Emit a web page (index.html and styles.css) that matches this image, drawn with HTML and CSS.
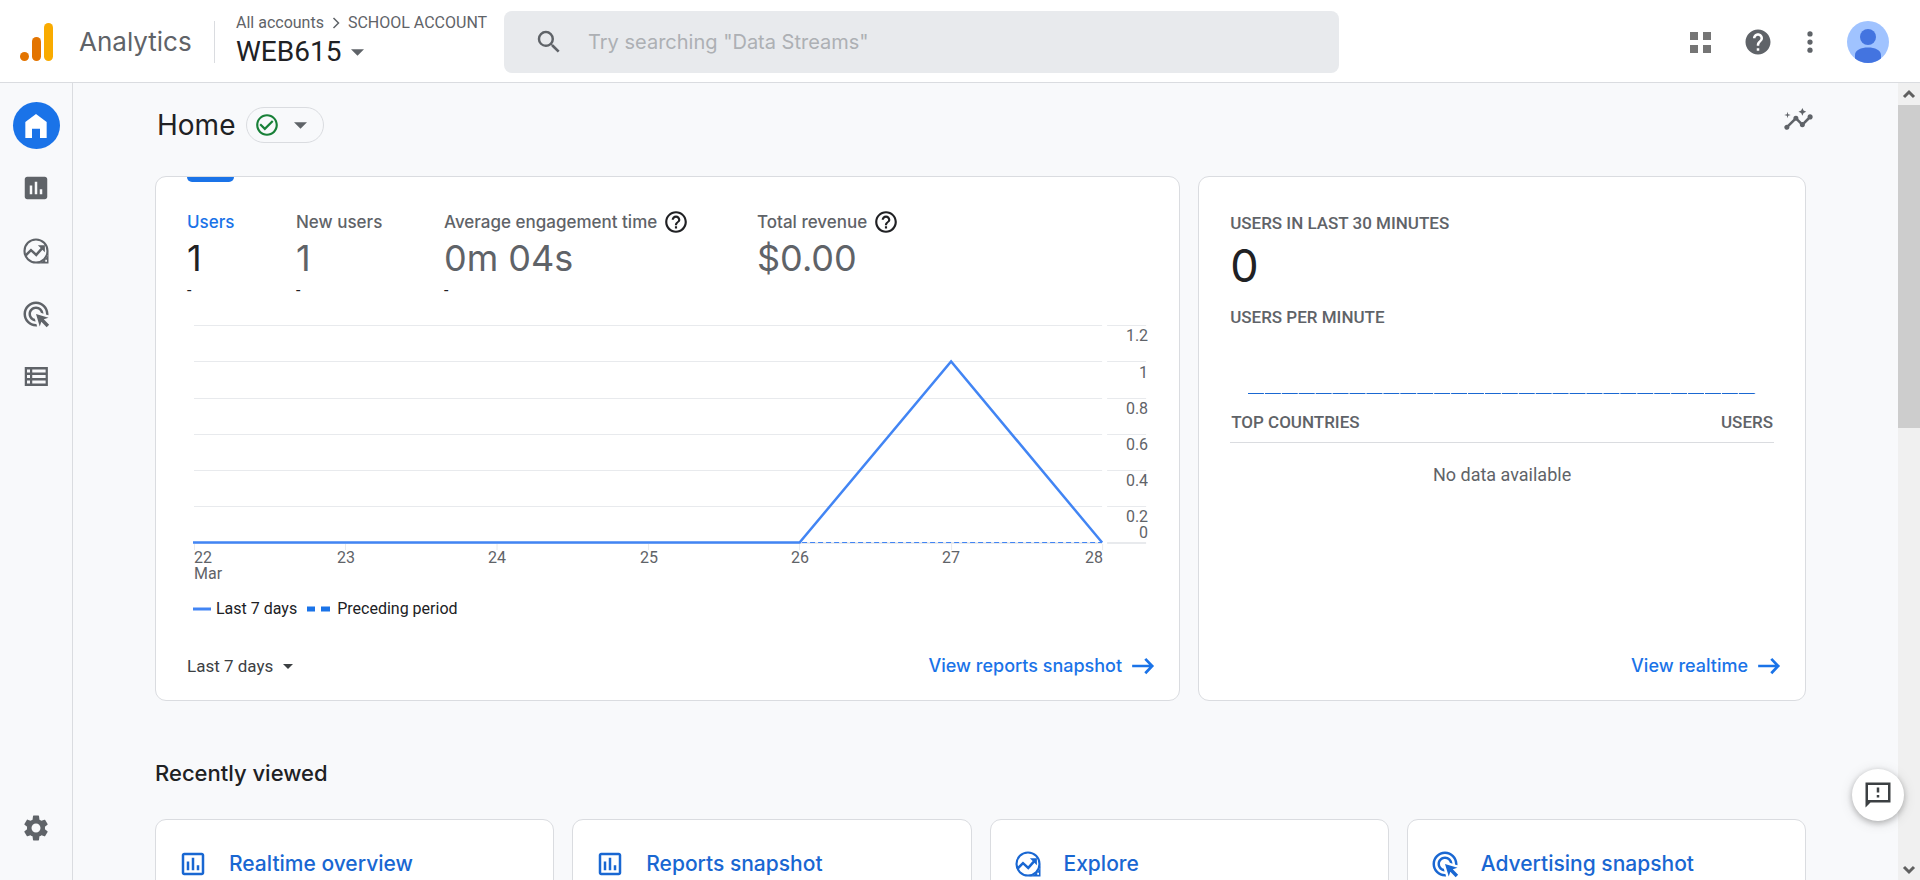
FILE: index.html
```html
<!DOCTYPE html>
<html lang="en">
<head>
<meta charset="utf-8">
<meta name="viewport" content="width=device-width, initial-scale=1">
<title>Analytics | Home</title>
<link rel="stylesheet" href="styles.css">
</head>
<body>
<svg class="sprite" aria-hidden="true">
  <symbol id="i-east" viewBox="0 0 24 24"><path d="m15 4.500-1.800 1.800L17.600 10.800H2v2.400h15.600l-4.400 4.500L15 19.500l7.200-7.500z"/></symbol>
  <symbol id="i-caret" viewBox="0 0 14 7"><path d="M0 0h14L7 7z"/></symbol>
  <symbol id="i-help" viewBox="0 0 24 24"><path d="M11 18h2v-2h-2zm1-16C6.480 2 2 6.480 2 12s4.480 10 10 10 10-4.480 10-10S17.520 2 12 2m0 18c-4.410 0-8-3.590-8-8s3.590-8 8-8 8 3.590 8 8-3.590 8-8 8m0-14c-2.210 0-4 1.790-4 4h2c0-1.100.9-2 2-2s2 .9 2 2c0 2-3 1.750-3 5h2c0-2.250 3-2.500 3-5 0-2.210-1.790-4-4-4"/></symbol>
  <symbol id="i-bars" viewBox="0 0 24 24"><path d="M9 17H7v-7h2zm4 0h-2V7h2zm4 0h-2v-4h2zm2 2H5V5h14zm0-16H5c-1.100 0-2 .9-2 2v14c0 1.100.9 2 2 2h14c1.100 0 2-.9 2-2V5c0-1.100-.9-2-2-2"/></symbol>
  <symbol id="i-explore" viewBox="0 0 24 24"><circle cx="12" cy="12" r="9.200" fill="none" stroke="currentColor" stroke-width="1.700"/><path fill-rule="evenodd" d="M22 12v10H12a10 10 0 0 0 10-10m-2.600 7v1.500h1.400V19z"/><path d="M3.500 15.800l4.500-4.500 4.200 3.800 5-5.600" fill="none" stroke="currentColor" stroke-width="2"/><path d="M13.500 7.300h5.600v5.600z"/></symbol>
  <symbol id="i-ads" viewBox="0 0 24 24"><path d="M11.710 17.990C8.530 17.840 6 15.220 6 12c0-3.310 2.690-6 6-6 3.220 0 5.840 2.530 5.990 5.710l-2.100-.63C15.480 9.310 13.890 8 12 8c-2.210 0-4 1.790-4 4 0 1.890 1.310 3.480 3.080 3.890zM22 12c0 .3-.01.6-.04.9l-1.970-.59c.01-.1.01-.21.01-.31 0-4.420-3.580-8-8-8s-8 3.580-8 8 3.580 8 8 8c.1 0 .21 0 .31-.01l.59 1.970c-.3.03-.6.040-.9.040-5.520 0-10-4.480-10-10S6.480 2 12 2s10 4.480 10 10m-3.770 4.260L22 15l-10-3 3 10 1.260-3.770 4.270 4.270 1.980-1.980z"/></symbol>
</svg>

<header class="topbar">
  <a class="brand" href="#">
    <svg class="logo" viewBox="0 0 33 38" aria-hidden="true"><rect x="24" width="9" height="38" rx="4.500" fill="#f9ab00"/><rect x="12" y="14" width="9" height="24" rx="4.500" fill="#e37400"/><circle cx="4.500" cy="33.500" r="4.500" fill="#e37400"/></svg>
    <span class="brand-name">Analytics</span>
  </a>
  <div class="account">
    <nav class="crumbs" aria-label="Account">
      <a href="#">All accounts</a>
      <svg viewBox="0 0 8 12" aria-hidden="true"><path d="M1.500 1l5 5-5 5" fill="none" stroke="currentColor" stroke-width="1.500"/></svg>
      <a href="#">SCHOOL ACCOUNT</a>
    </nav>
    <button class="property" type="button" aria-haspopup="true">WEB615 <svg class="caret"><use href="#i-caret"/></svg></button>
  </div>
  <form class="search" role="search">
    <svg class="icon" viewBox="0 0 24 24" aria-hidden="true"><path d="M15.500 14h-.79l-.28-.27A6.471 6.471 0 0 0 16 9.500 6.500 6.500 0 1 0 9.500 16c1.610 0 3.090-.59 4.230-1.570l.27.28v.79l5 4.990L20.490 19zm-6 0C7.010 14 5 11.990 5 9.500S7.010 5 9.500 5 14 7.010 14 9.500 11.990 14 9.500 14"/></svg>
    <input type="search" aria-label="Search" placeholder="Try searching &quot;Data Streams&quot;">
  </form>
  <div class="actions">
    <button class="apps" type="button" aria-label="Apps"><svg viewBox="0 0 21 21"><path d="M0 0h8v8H0zm13 0h8v8h-8zM0 13h8v8H0zm13 0h8v8h-8z"/></svg></button>
    <button type="button" aria-label="Help"><svg class="icon" viewBox="0 0 24 24"><path d="M12 2C6.480 2 2 6.480 2 12s4.480 10 10 10 10-4.480 10-10S17.520 2 12 2m1 17h-2v-2h2zm2.070-7.750-.9.920C13.450 12.900 13 13.500 13 15h-2v-.5c0-1.100.45-2.100 1.170-2.830l1.240-1.260c.37-.36.59-.86.59-1.410 0-1.100-.9-2-2-2s-2 .9-2 2H8c0-2.210 1.790-4 4-4s4 1.790 4 4c0 .88-.36 1.680-.93 2.250"/></svg></button>
    <button type="button" aria-label="More"><svg class="icon" viewBox="0 0 24 24"><circle cx="12" cy="5.500" r="2.100"/><circle cx="12" cy="12" r="2.100"/><circle cx="12" cy="18.500" r="2.100"/></svg></button>
    <button type="button" aria-label="Profile"><svg class="avatar" viewBox="0 0 42 42"><circle cx="21" cy="21" r="21" fill="#a0c3ff"/><circle cx="21" cy="16" r="8" fill="#4374e0"/><path d="M8 37.500V34c0-5 6-7.500 13-7.500S34 29 34 34v3.500A21 21 0 0 1 21 42 21 21 0 0 1 8 37.500" fill="#4374e0"/></svg></button>
  </div>
</header>

<div class="shell">
  <nav class="rail" aria-label="Main">
    <a class="rail-item active" href="#" aria-label="Home"><svg viewBox="0 0 24 24"><path d="M4 21V9l8-6 8 6v12h-5v-7H9v7z"/></svg></a>
    <a class="rail-item" href="#" aria-label="Reports"><svg viewBox="0 0 24 24"><path d="M19 3H5c-1.100 0-2 .9-2 2v14c0 1.100.9 2 2 2h14c1.100 0 2-.9 2-2V5c0-1.100-.9-2-2-2M9 17H7v-7h2zm4 0h-2V7h2zm4 0h-2v-4h2z"/></svg></a>
    <a class="rail-item" href="#" aria-label="Explore"><svg><use href="#i-explore"/></svg></a>
    <a class="rail-item" href="#" aria-label="Advertising"><svg><use href="#i-ads"/></svg></a>
    <a class="rail-item" href="#" aria-label="Configure"><svg viewBox="0 0 24 24"><path fill-rule="evenodd" d="M3 4h18.500v15.200H3zM4.800 6v2.400h2.400V6zm4.200 0v2.400h10.700V6zm-4.200 4.400v2.400h2.400v-2.400zm4.200 0v2.400h10.700v-2.400zm-4.200 4.400v2.400h2.400v-2.400zm4.200 0v2.400h10.700v-2.400z"/></svg></a>
    <a class="rail-item rail-end" href="#" aria-label="Admin"><svg viewBox="0 0 24 24"><path d="M19.140 12.940c.04-.3.060-.61.060-.94 0-.32-.02-.64-.07-.94l2.030-1.580c.18-.14.230-.41.120-.61l-1.920-3.320c-.12-.22-.37-.29-.59-.22l-2.390.96c-.5-.38-1.030-.7-1.620-.94l-.36-2.940c-.04-.24-.24-.41-.48-.41h-3.840c-.24 0-.43.170-.47.410l-.36 2.940c-.59.240-1.130.57-1.620.94l-2.390-.96c-.22-.08-.47 0-.59.220L2.740 8.870c-.12.210-.08.470.120.610l2.030 1.580c-.05.3-.09.63-.09.940s.02.640.07.940l-2.030 1.580c-.18.140-.23.410-.12.610l1.920 3.320c.12.220.37.290.59.220l2.390-.96c.5.380 1.030.7 1.620.94l.36 2.940c.05.240.24.410.48.410h3.840c.24 0 .44-.17.47-.41l.36-2.940c.59-.24 1.130-.56 1.620-.94l2.390.96c.22.080.47 0 .59-.22l1.920-3.320c.12-.22.070-.47-.12-.61zM12 15.600c-1.980 0-3.600-1.620-3.600-3.600s1.620-3.600 3.600-3.600 3.600 1.620 3.600 3.600-1.620 3.600-3.600 3.600"/></svg></a>
  </nav>

  <main class="main">
    <div class="page-head">
      <h1>Home</h1>
      <button class="status" type="button" aria-label="Data quality">
        <svg class="check" viewBox="0 0 24 24"><path d="M16.590 7.580 10 14.170l-3.590-3.580L5 12l5 5 8-8zM12 2C6.480 2 2 6.480 2 12s4.480 10 10 10 10-4.480 10-10S17.520 2 12 2m0 18c-4.420 0-8-3.580-8-8s3.580-8 8-8 8 3.580 8 8-3.580 8-8 8"/></svg>
        <svg class="caret"><use href="#i-caret"/></svg>
      </button>
      <button class="insights" type="button" aria-label="Insights"><svg viewBox="0 0 24 24"><path d="M21 8c-1.450 0-2.260 1.440-1.930 2.510l-3.550 3.560c-.3-.09-.74-.09-1.040 0l-2.550-2.550C12.270 10.450 11.460 9 10 9c-1.450 0-2.270 1.440-1.930 2.520l-4.560 4.550C2.440 15.740 1 16.550 1 18c0 1.100.9 2 2 2 1.450 0 2.260-1.440 1.930-2.510l4.550-4.560c.3.090.74.090 1.040 0l2.550 2.550C12.730 16.550 13.540 18 15 18c1.450 0 2.270-1.440 1.930-2.520l3.560-3.550C21.560 12.260 23 11.450 23 10c0-1.100-.9-2-2-2"/><path d="M15 9l.94-2.070L18 6l-2.060-.93L15 3l-.92 2.070L12 6l2.080.93zM3.500 11L4 9l2-.5L4 8l-.5-2L3 8l-2 .5L3 9z"/></svg></button>
    </div>

    <div class="cards">
      <section class="card overview">
        <div class="metrics" role="tablist">
          <button class="metric selected" type="button" role="tab" aria-selected="true"><span class="metric-label">Users</span><span class="metric-value">1</span><span class="metric-delta">-</span></button>
          <button class="metric" type="button" role="tab" aria-selected="false"><span class="metric-label">New users</span><span class="metric-value">1</span><span class="metric-delta">-</span></button>
          <button class="metric" type="button" role="tab" aria-selected="false"><span class="metric-label">Average engagement time <svg><use href="#i-help"/></svg></span><span class="metric-value">0m 04s</span><span class="metric-delta">-</span></button>
          <button class="metric" type="button" role="tab" aria-selected="false"><span class="metric-label">Total revenue <svg><use href="#i-help"/></svg></span><span class="metric-value">$0.00</span></button>
        </div>
        <svg class="chart" viewBox="0 0 961 270" role="img" aria-label="Users over the last 7 days">
          <g class="grid">
            <path d="M7 5.500H915M920 5.500H959M7 41.500H915M920 41.500H959M7 78.500H915M920 78.500H959M7 114.500H915M920 114.500H959M7 150.500H915M920 150.500H959M7 186.500H915M920 186.500H959"/>
            <path d="M7.500 224v6M158.500 224v6M310 224v6M461.500 224v6M612.500 224v6M764.500 224v6M915.500 224v6"/>
            <path class="base" d="M7 223H915M920 223H959"/>
          </g>
          <path class="previous" d="M7 222.500H915"/>
          <path class="current" d="M6 222.500H612.500L764 41.500 915 222.500"/>
          <g class="axis-y">
            <text x="961" y="21">1.2</text><text x="961" y="58">1</text><text x="961" y="94">0.8</text><text x="961" y="130">0.6</text><text x="961" y="166">0.4</text><text x="961" y="202">0.2</text><text x="961" y="218">0</text>
          </g>
          <g class="axis-x">
            <text class="first" x="7" y="243">22</text><text class="first" x="7" y="259">Mar</text><text x="159" y="243">23</text><text x="310" y="243">24</text><text x="462" y="243">25</text><text x="613" y="243">26</text><text x="764" y="243">27</text><text class="last" x="916" y="243">28</text>
          </g>
        </svg>
        <ul class="legend">
          <li><svg class="key-solid" viewBox="0 0 18 6" aria-hidden="true"><path d="M0 3h18" stroke="#4285f4" stroke-width="3"/></svg>Last 7 days</li>
          <li><svg class="key-dash" viewBox="0 0 23 6" aria-hidden="true"><path d="M0 3h8M14 3h9" stroke="#1a73e8" stroke-width="5"/></svg>Preceding period</li>
        </ul>
        <footer class="card-foot">
          <span class="range">
            <select aria-label="Date range"><option>Last 7 days</option><option>Last 28 days</option></select>
            <svg class="caret small"><use href="#i-caret"/></svg>
          </span>
          <a class="more" href="#">View reports snapshot <svg><use href="#i-east"/></svg></a>
        </footer>
      </section>

      <section class="card realtime">
        <h2 class="overline">USERS IN LAST 30 MINUTES</h2>
        <p class="live-count">0</p>
        <h2 class="overline">USERS PER MINUTE</h2>
        <svg class="minutes" viewBox="0 0 508 3" preserveAspectRatio="none" role="img" aria-label="No users in the last 30 minutes"><path d="M0 1.500H508" stroke="#1967d2" stroke-dasharray="15.930 1"/></svg>
        <table class="countries">
          <thead><tr><th scope="col">TOP COUNTRIES</th><th scope="col">USERS</th></tr></thead>
          <tbody><tr><td colspan="2">No data available</td></tr></tbody>
        </table>
        <footer class="card-foot">
          <a class="more" href="#">View realtime <svg><use href="#i-east"/></svg></a>
        </footer>
      </section>
    </div>

    <h2 class="section-title">Recently viewed</h2>
    <div class="recent">
      <a class="card tile" href="#"><svg><use href="#i-bars"/></svg>Realtime overview</a>
      <a class="card tile" href="#"><svg><use href="#i-bars"/></svg>Reports snapshot</a>
      <a class="card tile" href="#"><svg><use href="#i-explore"/></svg>Explore</a>
      <a class="card tile" href="#"><svg><use href="#i-ads"/></svg>Advertising snapshot</a>
    </div>
  </main>

  <div class="scrollbar" aria-hidden="true">
    <svg viewBox="0 0 22 22"><path d="M6 14l5-5 5 5" fill="none" stroke="#606060" stroke-width="3"/></svg>
    <div class="thumb"></div>
    <svg viewBox="0 0 22 22"><path d="M6 9l5 5 5-5" fill="none" stroke="#606060" stroke-width="3"/></svg>
  </div>
</div>

<button class="feedback" type="button" aria-label="Send feedback"><svg viewBox="0 0 24 24"><path d="M2 2v20l4-4h16V2zm18 14H4V4h16zM11 6h2v4h-2zm0 6h2v2h-2z"/></svg></button>
</body>
</html>
```
FILE: styles.css
```css
:root {
  --text: #202124;
  --muted: #5f6368;
  --line: #dadce0;
  --blue: #1a73e8;
  --link: #1967d2;
  --page: #f8f9fb;
  --display: Inter, "Open Sans", sans-serif;
}

* { box-sizing: border-box; }

body {
  margin: 0;
  height: 100vh;
  display: flex;
  flex-direction: column;
  overflow: hidden;
  background: var(--page);
  color: var(--text);
  font-family: Roboto, Arial, sans-serif;
  font-size: 16px;
}

h1, h2, p, ul { margin: 0; padding: 0; font-weight: 400; }
a { color: inherit; text-decoration: none; }
svg { display: block; flex: none; fill: currentColor; }
button, input, select { font: inherit; color: inherit; background: none; border: 0; padding: 0; margin: 0; }
.sprite { display: none; }
.caret { width: 13px; height: 7px; color: var(--muted); }
.caret.small { width: 10px; height: 5px; color: #3c4043; }
.icon { width: 30px; height: 30px; color: var(--muted); }

.topbar {
  flex: none;
  height: 83px;
  display: flex;
  align-items: center;
  padding: 2px 31px 0 20px;
  background: #fff;
  border-bottom: 1px solid var(--line);
}
.brand { display: flex; align-items: center; gap: 26px; width: 194px; color: var(--muted); }
.logo { width: 33px; height: 38px; }
.brand-name { font: 400 26px/40px var(--display); }
.account { width: 290px; padding-left: 21px; border-left: 1px solid var(--line); height: 42px; display: flex; flex-direction: column; justify-content: center; }
.crumbs { display: flex; align-items: center; gap: 8px; color: var(--muted); line-height: 20px; white-space: nowrap; }
.crumbs svg { width: 8px; height: 12px; }
.property { display: flex; align-items: center; gap: 10px; font: 400 28px/38px Roboto, sans-serif; }
.search {
  flex: 0 1 835px;
  height: 62px;
  display: flex;
  align-items: center;
  gap: 24px;
  padding: 0 35px 0 30px;
  background: #e8eaed;
  border-radius: 8px;
}
.search input { flex: 1; min-width: 0; outline: 0; font: 400 20px/30px var(--display); }
.search input::placeholder { color: #adb0b4; opacity: 1; }
.actions { margin-left: auto; display: flex; align-items: center; gap: 22px; }
.actions button { display: flex; align-items: center; justify-content: center; min-width: 30px; }
.actions .apps { margin-right: 6px; color: #757575; }
.apps svg { width: 21px; height: 21px; }
.actions .avatar { width: 42px; height: 42px; }

.shell { flex: 1; min-height: 0; display: flex; }

.rail {
  flex: none;
  width: 73px;
  display: flex;
  flex-direction: column;
  align-items: center;
  gap: 16px;
  padding: 19px 0 29px;
  border-right: 1px solid var(--line);
  color: var(--muted);
}
.rail-item { width: 47px; height: 47px; display: grid; place-items: center; border-radius: 50%; }
.rail-item svg { width: 30px; height: 30px; }
.rail-item.active { margin-bottom: -1px; background: var(--blue); color: #fff; }
.rail-item.active svg { width: 32px; height: 32px; }
.rail-end { margin-top: auto; }

.main { flex: 1; min-width: 0; padding: 0 92px 0 82px; overflow: hidden; }

.page-head { display: flex; align-items: center; height: 84px; padding-left: 2px; }
h1 { font: 400 28px/36px var(--display); }
.status { display: flex; align-items: center; gap: 14px; height: 36px; margin-left: 11px; padding: 0 16px 0 7px; border: 1px solid var(--line); border-radius: 18px; }
.status .check { width: 26px; height: 26px; color: #188038; }
.insights { margin: 0 -8px 11px auto; color: var(--muted); }
.insights svg { width: 31px; height: 31px; }

.cards { display: grid; grid-template-columns: repeat(8, minmax(0, 1fr)); gap: 18px; margin-top: 9px; }
.card { background: #fff; border: 1px solid var(--line); border-radius: 11px; }
.overview, .realtime { display: flex; flex-direction: column; }
.overview { grid-column: span 5; padding: 0 31px; }
.realtime { grid-column: span 3; padding: 35px 31px 0; }

.metrics { display: grid; grid-template-columns: 109px 148px 313px auto; justify-items: start; }
.metric { display: flex; flex-direction: column; align-items: flex-start; color: var(--muted); text-align: left; }
.metric::before { content: ""; align-self: stretch; height: 5px; margin-bottom: 26px; border-radius: 0 0 6px 6px; }
.metric.selected::before { background: var(--blue); }
.metric-label { display: flex; align-items: center; gap: 6px; height: 28px; font: 500 17px/28px var(--display); white-space: nowrap; }
.metric-label svg { width: 26px; height: 26px; color: var(--text); }
.metric-value { font: 400 36px/44px var(--display); }
.metric-delta { line-height: 22px; color: var(--text); }
.selected .metric-label { color: var(--blue); }
.selected .metric-value { color: var(--text); }

.chart { width: 100%; height: auto; margin-top: 18px; }
.chart text { font: 400 16px Roboto, sans-serif; fill: var(--muted); }
.grid path { fill: none; stroke: #e8eaed; }
.grid .base { stroke-width: 2; }
.previous { fill: none; stroke: #4285f4; stroke-width: 1; stroke-dasharray: 5 3; }
.current { fill: none; stroke: #4285f4; stroke-width: 2.5; }
.axis-y text, .axis-x .last { text-anchor: end; }
.axis-x text { text-anchor: middle; }
.axis-x .first { text-anchor: start; }

.legend { display: flex; gap: 10px; margin-left: 6px; padding-top: 9px; list-style: none; line-height: 20px; }
.legend li { display: flex; align-items: center; gap: 5px; }
.key-solid { width: 18px; height: 6px; }
.key-dash { width: 23px; height: 6px; margin-right: 2px; }

.card-foot { display: flex; align-items: center; justify-content: space-between; margin: auto -8px 0 0; padding: 33px 0 20px; }
.range { display: grid; align-items: center; color: #3c4043; font-size: 17px; }
.range > * { grid-area: 1 / 1; }
.range select { appearance: none; padding-right: 10px; }
.range .caret { justify-self: end; pointer-events: none; }
.more { display: flex; align-items: center; gap: 8px; margin-left: auto; color: var(--blue); font: 500 18px/28px var(--display); white-space: nowrap; }
.more svg { width: 26px; height: 26px; }

.overline { color: var(--muted); font: 500 17px/22px Roboto, sans-serif; }
.live-count { padding: 2px 0 10px; font: 400 45px/60px var(--display); }
.minutes { width: auto; height: 3px; margin: 64px 18px 0; }
.countries { width: 100%; margin-top: 16px; border-collapse: collapse; color: var(--muted); }
.countries th { padding: 0 1px 9px; border-bottom: 1px solid var(--line); text-align: left; font: 500 17px/22px Roboto, sans-serif; }
.countries th:last-child { text-align: right; }
.countries td { padding: 20px 0; text-align: center; font-size: 18px; line-height: 24px; }

.section-title { margin-top: 57px; font: 500 22px/30px var(--display); }
.recent { display: grid; grid-template-columns: repeat(4, minmax(0, 1fr)); gap: 18px; margin-top: 31px; }
.tile { display: flex; gap: 21px; height: 210px; padding: 29px 22px; color: var(--link); font: 500 21px/30px var(--display); }
.tile svg { width: 30px; height: 30px; }

.scrollbar { flex: none; width: 22px; display: flex; flex-direction: column; background: #f0f0f0; }
.scrollbar svg { width: 22px; height: 22px; }
.thumb { height: 40.5%; margin-bottom: auto; background: #cdcdcd; }

.feedback {
  position: fixed;
  right: 16px;
  bottom: 59px;
  width: 52px;
  height: 52px;
  display: grid;
  place-items: center;
  border-radius: 50%;
  background: #fff;
  color: #3c4043;
  box-shadow: 0 2px 6px rgba(0, 0, 0, .25), 0 2px 14px rgba(0, 0, 0, .12);
}
.feedback svg { width: 30px; height: 30px; }
```
